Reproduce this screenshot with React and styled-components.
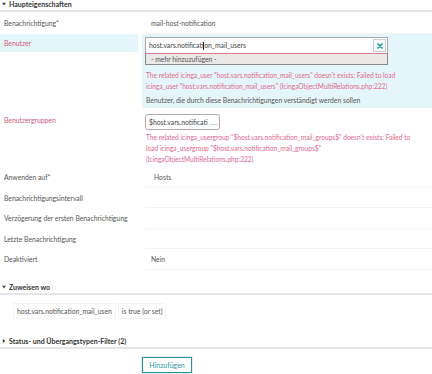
import React from "react";
import styled, { createGlobalStyle } from "styled-components";

const Global = createGlobalStyle`
  html, body { margin: 0; padding: 0; background: #fff; }
  body { font-family: Lato, "Open Sans", "Liberation Sans", sans-serif; font-size: 6.8px; color: #555; }
  * { box-sizing: border-box; }
`;

const Page = styled.div`
  width: 432px;
  height: 374px;
  overflow: hidden;
  display: flex;
  flex-direction: column;
`;

const SectionHeader = styled.div`
  display: flex;
  align-items: center;
  gap: 3px;
  height: 12px;
  flex-shrink: 0;
  padding: 0 0 2px 2px;
  margin-top: ${(p) => p.$mt || 0}px;
  border-bottom: 2px solid #e6e6e6;
  font-weight: 700;
  font-size: 7px;
  color: #333;
  line-height: 8px;
`;

const Caret = ({ open }) => (
  <svg width="4" height="4" viewBox="0 0 4 4">
    {open ? <path d="M0 0.8 L4 0.8 L2 3.4 Z" fill="#444" /> : <path d="M0.8 0 L3.4 2 L0.8 4 Z" fill="#444" />}
  </svg>
);

const Row = styled.div`
  display: grid;
  grid-template-columns: 138px 1fr;
  column-gap: 4px;
  flex-shrink: 0;
  min-height: ${(p) => p.$h || 20.5}px;
`;

const Label = styled.div`
  display: flex;
  align-items: center;
  padding-left: 4px;
  color: ${(p) => (p.$error ? "#d0587a" : "#555")};
  background: ${(p) => (p.$active ? "#e5f6fb" : "transparent")};
  height: ${(p) => (p.$lh ? p.$lh + "px" : "auto")};
  align-self: ${(p) => (p.$lh ? "start" : "stretch")};
`;

const Value = styled.div`
  display: flex;
  align-items: center;
  padding-left: ${(p) => p.$pl || 6}px;
  margin-left: 3px;
  border-bottom: 1px solid #f3f3f3;
  color: #555;
`;

const ActiveCell = styled.div`
  background: #e5f6fb;
  padding: 3px 0 1px 3px;
  display: flex;
  flex-direction: column;
`;

const PlainCell = styled.div`
  padding: 6px 0 2px 3px;
  display: flex;
  flex-direction: column;
`;

const InputBox = styled.div`
  width: 243px;
  height: 16px;
  background: #fff;
  border: 1px solid #a9a9a9;
  border-bottom: none;
  display: flex;
  align-items: center;
  justify-content: space-between;
  padding: 0 1px 0 3px;
  color: #444;
`;

const TextCaret = styled.span`
  display: inline-block;
  width: 1px;
  height: 8px;
  background: #222;
  vertical-align: middle;
  margin: 0 0 0 -0.5px;
`;

const RemoveBtn = styled.div`
  width: 13px;
  height: 13px;
  border: 1px solid #c8d0d2;
  background: #f4f8f9;
  display: flex;
  align-items: center;
  justify-content: center;
`;

const DropOption = styled.div`
  width: 243px;
  height: 12px;
  background: #ebe8e8;
  border: 1px solid #8a8a8a;
  border-top: 1px solid #d57f93;
  display: flex;
  align-items: center;
  padding-left: 5px;
  color: #555;
`;

const ErrorText = styled.div`
  margin-top: ${(p) => p.$mt || 5}px;
  padding-left: 1px;
  color: #e0688a;
  font-size: 6.6px;
  line-height: 11px;
  padding-right: 20px;
`;

const Help = styled.div`
  margin-top: 2px;
  padding-left: 1px;
  line-height: 13px;
  color: #555;
`;

const TagInput = styled.div`
  width: 75px;
  height: 16px;
  border: 1px solid #bba3aa;
  border-radius: 3px;
  display: flex;
  align-items: center;
  padding-left: 3px;
  color: #444;
  white-space: nowrap;
  overflow: hidden;
`;

const More = styled.span`
  color: #5a9ab8;
  margin-left: 3px;
`;

const FilterRow = styled.div`
  display: flex;
  gap: 2px;
  padding-left: 13px;
  margin-top: 8px;
  flex-shrink: 0;
`;

const Chip = styled.div`
  height: 16px;
  display: flex;
  align-items: center;
  padding: 0 3px;
  border: 1px solid #f4f4f4;
  color: #555;
`;

const ButtonRow = styled.div`
  padding-left: 142px;
  margin-top: 8px;
  flex-shrink: 0;
`;

const Button = styled.button`
  font-family: inherit;
  font-size: 7px;
  width: 50px;
  height: 16px;
  padding: 0;
  background: #fff;
  border: 1px solid #2b8f9e;
  box-shadow: 0 0 0 1px #dff0f2;
  color: #2c95a6;
`;

export default function App() {
  return (
    <Page>
      <Global />
      <SectionHeader>
        <Caret open />
        Haupteigenschaften
      </SectionHeader>

      <Row $h={22}>
        <Label>Benachrichtigung*</Label>
        <Value>mail-host-notification</Value>
      </Row>

      <Row>
        <Label $error $active $lh={18}>Benutzer</Label>
        <ActiveCell>
          <InputBox>
            <span>
              host.vars.notificati<TextCaret />on_mail_users
            </span>
            <RemoveBtn>
              <svg width="6" height="6" viewBox="0 0 6 6">
                <path d="M1 1 L5 5 M5 1 L1 5" stroke="#17998a" strokeWidth="1.6" strokeLinecap="round" />
              </svg>
            </RemoveBtn>
          </InputBox>
          <DropOption>- mehr hinzuzufügen -</DropOption>
          <ErrorText $mt={5}>
            The related icinga_user "host.vars.notification_mail_users" doesn't exists: Failed to load
            <br />
            icinga_user "host.vars.notification_mail_users" (IcingaObjectMultiRelations.php:222)
          </ErrorText>
          <Help>Benutzer, die durch diese Benachrichtigungen verständigt werden sollen</Help>
        </ActiveCell>
      </Row>

      <Row>
        <Label $error $lh={24}>Benutzergruppen</Label>
        <PlainCell>
          <TagInput>
            $host.vars.notificati<More>....</More>
          </TagInput>
          <ErrorText $mt={2}>
            The related icinga_usergroup "$host.vars.notification_mail_groups$" doesn't exists: Failed to
            <br />
            load icinga_usergroup "$host.vars.notification_mail_groups$"
            <br />
            (IcingaObjectMultiRelations.php:222)
          </ErrorText>
        </PlainCell>
      </Row>

      <Row>
        <Label>Anwenden auf*</Label>
        <Value $pl={9}>Hosts</Value>
      </Row>
      <Row>
        <Label>Benachrichtigungsintervall</Label>
        <Value />
      </Row>
      <Row>
        <Label>Verzögerung der ersten Benachrichtigung</Label>
        <Value />
      </Row>
      <Row>
        <Label>Letzte Benachrichtigung</Label>
        <Value />
      </Row>
      <Row>
        <Label>Deaktiviert</Label>
        <Value>Nein</Value>
      </Row>

      <SectionHeader $mt={13.5}>
        <Caret open />
        Zuweisen wo
      </SectionHeader>
      <FilterRow>
        <Chip>host.vars.notification_mail_usen</Chip>
        <Chip>is true (or set)</Chip>
      </FilterRow>

      <SectionHeader $mt={18}>
        <Caret />
        Status- und Übergangstypen-Filter (2)
      </SectionHeader>
      <ButtonRow>
        <Button>Hinzufügen</Button>
      </ButtonRow>
    </Page>
  );
}
